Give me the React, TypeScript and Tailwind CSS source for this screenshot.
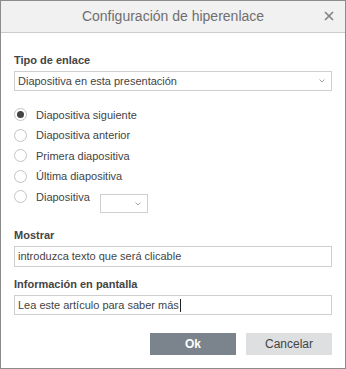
import { useState } from "react";

const options = [
    "Diapositiva siguiente",
    "Diapositiva anterior",
    "Primera diapositiva",
    "Última diapositiva",
];

function Chevron() {
    return (
        <svg width="6" height="4" viewBox="0 0 6 4" className="shrink-0">
            <path d="M0.5 0.5 L3 3 L5.5 0.5" fill="none" stroke="#9a9a9a" strokeWidth="0.9" />
        </svg>
    );
}

function Radio({ checked }: { checked: boolean }) {
    return (
        <span className="w-[13px] h-[13px] rounded-full border border-[#c4c4c4] bg-white flex items-center justify-center shrink-0">
            {checked && <span className="w-[7px] h-[7px] rounded-full bg-[#444444]" />}
        </span>
    );
}

export default function App() {
    const [selected, setSelected] = useState(0);

    return (
        <div
            className="w-[346px] h-[369px] border border-[#8c8c8c] bg-white flex flex-col text-[11px] text-[#444444]"
            style={{ fontFamily: '"Liberation Sans", Arial, sans-serif' }}
        >
            {/* cabecera */}
            <div className="h-[32px] shrink-0 bg-[#f1f1f1] border-b border-[#cbcbcb] flex items-center justify-center relative">
                <span className="text-[14px] text-[#6f6f6f]">Configuración de hiperenlace</span>
                <svg width="10" height="10" viewBox="0 0 10 10" className="absolute right-[11px] top-[10px]">
                    <path d="M1 1 L9 9 M9 1 L1 9" stroke="#808080" strokeWidth="1.6" />
                </svg>
            </div>

            <div className="flex flex-col px-[13px] pt-[20px]">
                <span className="font-bold leading-[14px]">Tipo de enlace</span>
                <div className="mt-[4px] h-[20px] border border-[#cfcfcf] flex items-center justify-between pl-[3px] pr-[6px]">
                    <span>Diapositiva en esta presentación</span>
                    <Chevron />
                </div>

                <div className="mt-[13.5px] flex flex-col">
                    {options.map((label, i) => (
                        <div
                            key={label}
                            className="h-[20.5px] flex items-center cursor-pointer"
                            onClick={() => setSelected(i)}
                        >
                            <Radio checked={selected === i} />
                            <span className="ml-[9px]">{label}</span>
                        </div>
                    ))}
                    <div className="flex items-start">
                        <div className="h-[20.5px] flex items-center cursor-pointer" onClick={() => setSelected(4)}>
                            <Radio checked={selected === 4} />
                            <span className="ml-[9px] w-[64px]">Diapositiva</span>
                        </div>
                        <div className="mt-[7.5px] w-[48px] h-[19px] border border-[#cfcfcf] flex items-center justify-end pr-[6px]">
                            <Chevron />
                        </div>
                    </div>
                </div>

                <span className="mt-[15px] font-bold leading-[14px]">Mostrar</span>
                <div className="mt-[4px] h-[21px] border border-[#cfcfcf] flex items-center pl-[3px]">
                    introduzca texto que será clicable
                </div>

                <span className="mt-[9.5px] font-bold leading-[14px]">Información en pantalla</span>
                <div className="mt-[4.5px] h-[20px] border border-[#cfcfcf] flex items-center pl-[3px]">
                    Lea este artículo para saber más
                    <span className="w-px h-[13px] bg-[#222222] ml-px" />
                </div>

                <div className="mt-[18px] flex justify-end gap-[10px]">
                    <button className="w-[86px] h-[22px] bg-[#7b848c] text-white font-bold text-[12px]">Ok</button>
                    <button className="w-[86px] h-[22px] bg-[#dedfe0] text-[#444444] text-[12px]">Cancelar</button>
                </div>
            </div>
        </div>
    );
}
